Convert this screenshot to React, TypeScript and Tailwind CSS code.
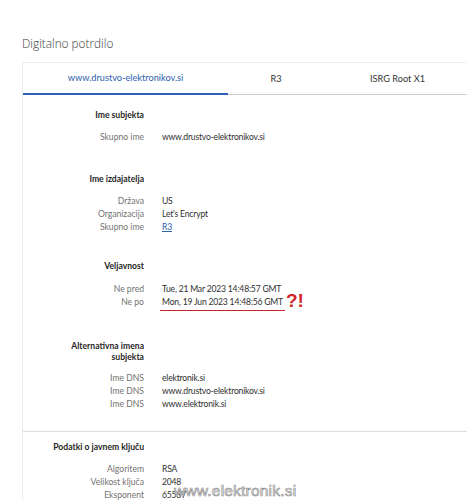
import React from 'react'

type Row = { label: string; value: React.ReactNode }

const Section = ({
  title,
  rows,
  className = '',
  rowsGap = 'mt-[9px]',
}: {
  title: React.ReactNode
  rows: Row[]
  className?: string
  rowsGap?: string
}) => (
  <div className={className}>
    <div className="grid grid-cols-[97px_1fr] gap-x-[18px]">
      <div className="text-right font-bold text-[#1f1f1f] leading-[11px]">{title}</div>
      <div />
    </div>
    <div className={`${rowsGap} grid grid-cols-[97px_1fr] gap-x-[18px]`}>
      {rows.map((r, i) => (
        <React.Fragment key={i}>
          <div className="text-right text-[#727272] leading-[13px] whitespace-nowrap">{r.label}</div>
          <div className="text-[#2f2f2f] leading-[13px] tracking-[-0.2px]">{r.value}</div>
        </React.Fragment>
      ))}
    </div>
  </div>
)

export default function App() {
  return (
    <div className="relative w-[467px] h-[500px] overflow-hidden bg-white font-['Lato',sans-serif] text-[8.6px]">
      <div className="pl-[22px] pt-[35px] text-[11.8px] font-['Open_Sans',sans-serif] font-light text-[#3a3a3a] leading-[16px]">
        Digitalno potrdilo
      </div>

      <div className="ml-[22px] mt-[11px] border-l border-t border-[#ececec] h-[500px]">
        {/* tabs */}
        <div className="flex h-[32px] text-[9.2px]">
          <div className="w-[205px] flex items-center justify-center border-b-2 border-[#2c61b5] text-[#2c5fae]">
            www.drustvo-elektronikov.si
          </div>
          <div className="w-[96px] flex items-center justify-center border-b border-[#cfcfcf] text-[#333]">R3</div>
          <div className="flex-1 flex items-center justify-center border-b border-[#cfcfcf] text-[#333] pl-[4px]">ISRG Root X1</div>
        </div>

        <div className="pl-[24px] pt-[15px]">
          <Section
            rowsGap="mt-[10px]"
            title="Ime subjekta"
            rows={[{ label: 'Skupno ime', value: 'www.drustvo-elektronikov.si' }]}
          />
          <Section
            className="mt-[30px]"
            rowsGap="mt-[10px]"
            title="Ime izdajatelja"
            rows={[
              { label: 'Država', value: 'US' },
              { label: 'Organizacija', value: "Let's Encrypt" },
              { label: 'Skupno ime', value: <span className="text-[#2c5fae] underline">R3</span> },
            ]}
          />
          <Section
            className="mt-[27px]"
            rowsGap="mt-[11px]"
            title="Veljavnost"
            rows={[
              { label: 'Ne pred', value: 'Tue, 21 Mar 2023 14:48:57 GMT' },
              {
                label: 'Ne po',
                value: (
                  <span className="relative inline-block">
                    <span className="inline-block border-b-[1.5px] border-[#c4262b] -ml-[2px] pl-[2px] pr-[2px] pb-[1px]">
                      Mon, 19 Jun 2023 14:48:56 GMT
                    </span>
                    <span className="absolute left-full ml-[1px] -top-[5px] text-[19px] font-black text-[#d0262c] font-['Liberation_Sans',sans-serif] leading-[20px] tracking-normal">
                      ?!
                    </span>
                  </span>
                ),
              },
            ]}
          />
          <Section
            className="mt-[30px]"
            rowsGap="mt-[9px]"
            title={<>Alternativna imena<br />subjekta</>}
            rows={[
              { label: 'Ime DNS', value: 'elektronik.si' },
              { label: 'Ime DNS', value: 'www.drustvo-elektronikov.si' },
              { label: 'Ime DNS', value: 'www.elektronik.si' },
            ]}
          />
        </div>

        <div className="mt-[20px] border-t border-[#dedede] pl-[24px] pt-[10px]">
          <Section
            rowsGap="mt-[10px]"
            title={<span className="whitespace-nowrap">Podatki o javnem ključu</span>}
            rows={[
              { label: 'Algoritem', value: 'RSA' },
              { label: 'Velikost ključa', value: '2048' },
              { label: 'Eksponent', value: '65537' },
            ]}
          />
        </div>
      </div>

      <div className="absolute left-[174px] top-[481px] text-[15.5px] tracking-[0.2px] text-white font-['Liberation_Sans',sans-serif] [-webkit-text-stroke:0.7px_#8f8f8f] leading-[20px]">
        www.elektronik.si
      </div>
    </div>
  )
}
